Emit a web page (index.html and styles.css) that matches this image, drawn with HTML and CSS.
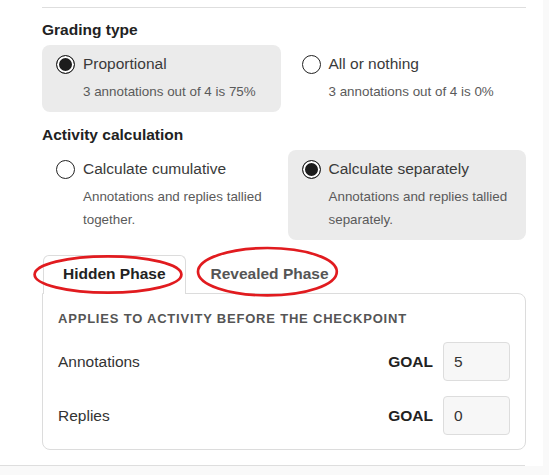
FILE: index.html
```html
<!DOCTYPE html>
<html lang="en">
<head>
<meta charset="utf-8">
<title>Grading settings</title>
<link rel="stylesheet" href="styles.css">
</head>
<body>
<div class="page">
  <div class="content">
    <section class="group">
      <h3 class="group-title">Grading type</h3>
      <div class="options">
        <label class="option selected">
          <span class="radio checked"></span>
          <span class="option-label">Proportional</span>
          <span class="option-desc">3 annotations out of 4 is 75%</span>
        </label>
        <label class="option">
          <span class="radio"></span>
          <span class="option-label">All or nothing</span>
          <span class="option-desc">3 annotations out of 4 is 0%</span>
        </label>
      </div>
    </section>

    <section class="group">
      <h3 class="group-title">Activity calculation</h3>
      <div class="options">
        <label class="option">
          <span class="radio"></span>
          <span class="option-label">Calculate cumulative</span>
          <span class="option-desc">Annotations and replies tallied together.</span>
        </label>
        <label class="option selected">
          <span class="radio checked"></span>
          <span class="option-label">Calculate separately</span>
          <span class="option-desc">Annotations and replies tallied separately.</span>
        </label>
      </div>
    </section>

    <div class="tabs">
      <div class="tab-list">
        <div class="tab active">Hidden Phase</div>
        <div class="tab">Revealed Phase</div>
      </div>
      <div class="tab-panel">
        <div class="panel-heading">Applies to activity before the checkpoint</div>
        <div class="goal-row">
          <span class="goal-name">Annotations</span>
          <span class="goal-label">GOAL</span>
          <input class="goal-input" type="text" value="5">
        </div>
        <div class="goal-row">
          <span class="goal-name">Replies</span>
          <span class="goal-label">GOAL</span>
          <input class="goal-input" type="text" value="0">
        </div>
      </div>
    </div>
  </div>
  <div class="page-footer"></div>

  <svg class="marks" width="549" height="475" viewBox="0 0 549 475" aria-hidden="true">
    <ellipse cx="108" cy="274.5" rx="73.4" ry="18.2" fill="none" stroke="#e11b1f" stroke-width="2.7"/>
    <ellipse cx="267.4" cy="271.7" rx="69.4" ry="23.7" fill="none" stroke="#e11b1f" stroke-width="2.7"/>
  </svg>
</div>
</body>
</html>
```

FILE: styles.css
```css
* {
  box-sizing: border-box;
}

html, body {
  margin: 0;
  padding: 0;
}

body {
  background: #f9f9f9;
  font-family: "Liberation Sans", Arial, sans-serif;
  color: #333;
  width: 549px;
  height: 475px;
  overflow: hidden;
}

.page {
  position: relative;
  width: 543px;
  background: #fff;
}

.content {
  margin: 0 17px 0 42px;
  padding-top: 7px;
}

.content::before {
  content: "";
  display: block;
  border-top: 1px solid #dedede;
}

.group-title {
  margin: 12px 0 5px;
  font-size: 15.5px;
  line-height: 20px;
  font-weight: bold;
  color: #222;
}

.group + .group .group-title {
  margin-top: 13px;
}

.options {
  display: grid;
  grid-template-columns: 1fr 1fr;
  column-gap: 7px;
}

.option {
  display: grid;
  grid-template-columns: 19px 1fr;
  column-gap: 8px;
  align-items: center;
  padding: 7px 14px 9px;
  border-radius: 8px;
}

.option.selected {
  background: #ebebeb;
}

.radio {
  width: 19px;
  height: 19px;
  border-radius: 50%;
  border: 1.5px solid #222;
  background: #fff;
}

.radio.checked {
  background: #1c1c1c;
  box-shadow: inset 0 0 0 2px #fff;
}

.option-label {
  font-size: 15.5px;
  line-height: 24px;
  color: #3a3a3a;
}

.option-desc {
  grid-column: 2;
  margin-top: 4px;
  font-size: 13.4px;
  line-height: 23px;
  color: #5a5a5a;
}

.tabs {
  margin-top: 15px;
}

.tab-list {
  display: flex;
  gap: 5px;
  align-items: flex-end;
}

.tab {
  position: relative;
  z-index: 1;
  margin-bottom: -1px;
  padding: 8px 19px 10px;
  font-size: 15.5px;
  line-height: 20px;
  font-weight: bold;
  color: #555;
  border: 1px solid transparent;
  border-bottom: none;
  border-radius: 6px 6px 0 0;
}

.tab.active {
  color: #222;
  background: #fff;
  border-color: #dcdcdc;
  margin-left: 1px;
}

.tab-panel {
  border: 1px solid #dcdcdc;
  border-radius: 0 8px 8px 8px;
  padding: 17px 15px 14px;
}

.panel-heading {
  font-size: 13px;
  line-height: 16px;
  font-weight: bold;
  letter-spacing: 0.8px;
  text-transform: uppercase;
  color: #555;
  margin-bottom: 15px;
}

.goal-row {
  display: flex;
  align-items: center;
}

.goal-row + .goal-row {
  margin-top: 15px;
}

.goal-name {
  flex: 1;
  font-size: 15.5px;
  line-height: 20px;
  color: #333;
}

.goal-label {
  font-size: 15.5px;
  line-height: 20px;
  font-weight: bold;
  color: #222;
  margin-right: 10px;
}

.goal-input {
  width: 67px;
  height: 39px;
  padding: 0 10px;
  border: 1px solid #dddddd;
  border-radius: 4px;
  background: #f7f7f7;
  font-family: "Liberation Sans", Arial, sans-serif;
  font-size: 15.5px;
  color: #333;
}

.page-footer {
  width: 525px;
  margin-top: 15px;
  border-top: 1px solid #dedede;
}

.marks {
  position: absolute;
  left: 0;
  top: 0;
  z-index: 2;
  pointer-events: none;
}
```
